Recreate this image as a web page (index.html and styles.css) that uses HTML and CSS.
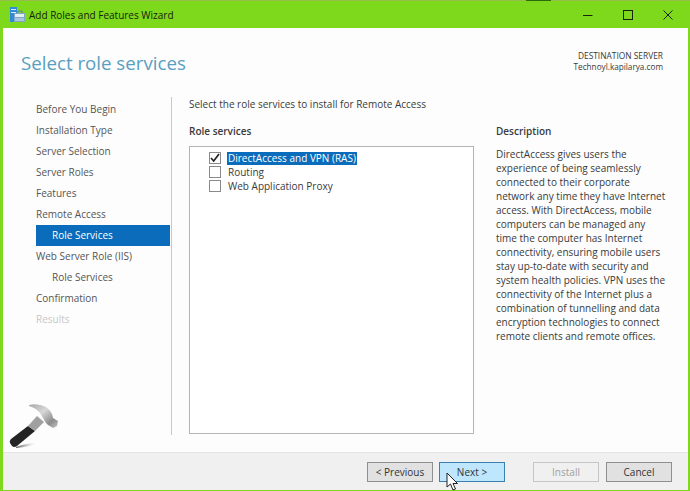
FILE: index.html
```html
<!DOCTYPE html>
<html>
<head>
    <link rel="stylesheet" href="styles.css">
    <title>Add Roles and Features Wizard</title>
</head>
<body>
    <div class="window">
        <div class="topline"><span class="topline-mark"></span></div>
        <div class="titlebar">
            <svg class="app-icon" width="15" height="15" viewBox="0 0 15 15">
                <rect x="0" y="0" width="7" height="15" fill="#2f8ad8"/>
                <rect x="1" y="2" width="5" height="1" fill="#d5ebfb"/>
                <rect x="1" y="5" width="5" height="1" fill="#d5ebfb"/>
                <path d="M8 6V4H12V6" stroke="#5d7f98" fill="none"/>
                <rect x="4" y="6" width="11" height="9" fill="#7fa6c4"/>
                <rect x="5" y="7" width="9" height="3" fill="#e4eef5"/>
                <rect x="5" y="11" width="9" height="3" fill="#a9c5da"/>
            </svg>
            <span class="title-text">Add Roles and Features Wizard</span>
            <div class="win-controls">
                <svg width="12" height="12" viewBox="0 0 12 12"><path d="M1 6.5H10.5" stroke="#16240c" stroke-width="1" fill="none"/></svg>
                <svg width="12" height="12" viewBox="0 0 12 12"><rect x="1.5" y="1.5" width="9" height="9" stroke="#16240c" stroke-width="1" fill="none"/></svg>
                <svg width="12" height="12" viewBox="0 0 12 12"><path d="M1.5 1.5L10.5 10.5M10.5 1.5L1.5 10.5" stroke="#16240c" stroke-width="1" fill="none"/></svg>
            </div>
        </div>

        <div class="content">
            <div class="header">
                <h1>Select role services</h1>
                <div class="dest">
                    <div class="dest-label">DESTINATION SERVER</div>
                    <div>Technoyl.kapilarya.com</div>
                </div>
            </div>

            <div class="main">
                <ul class="nav">
                    <li>Before You Begin</li>
                    <li>Installation Type</li>
                    <li>Server Selection</li>
                    <li>Server Roles</li>
                    <li>Features</li>
                    <li>Remote Access</li>
                    <li class="sub active">Role Services</li>
                    <li>Web Server Role (IIS)</li>
                    <li class="sub">Role Services</li>
                    <li>Confirmation</li>
                    <li class="disabled">Results</li>
                </ul>

                <div class="panel">
                    <p class="intro">Select the role services to install for Remote Access</p>
                    <div class="columns">
                        <div class="services">
                            <div class="col-title">Role services</div>
                            <div class="listbox">
                                <div class="item">
                                    <span class="check">
                                        <svg width="10" height="10" viewBox="0 0 10 10"><path d="M1 5L3.7 8L9 1" stroke="#222" stroke-width="1.7" fill="none"/></svg>
                                    </span>
                                    <span class="label selected">DirectAccess and VPN (RAS)</span>
                                </div>
                                <div class="item"><span class="check"></span><span class="label">Routing</span></div>
                                <div class="item"><span class="check"></span><span class="label">Web Application Proxy</span></div>
                            </div>
                        </div>
                        <div class="description">
                            <div class="col-title">Description</div>
                            <p>DirectAccess gives users the<br>
                            experience of being seamlessly<br>
                            connected to their corporate<br>
                            network any time they have Internet<br>
                            access. With DirectAccess, mobile<br>
                            computers can be managed any<br>
                            time the computer has Internet<br>
                            connectivity, ensuring mobile users<br>
                            stay up-to-date with security and<br>
                            system health policies. VPN uses the<br>
                            connectivity of the Internet plus a<br>
                            combination of tunnelling and data<br>
                            encryption technologies to connect<br>
                            remote clients and remote offices.</p>
                        </div>
                    </div>
                </div>
            </div>
        </div>

        <div class="footer">
            <button class="btn">&lt; Previous</button>
            <button class="btn hover">Next &gt;</button>
            <button class="btn off install">Install</button>
            <button class="btn">Cancel</button>
        </div>

        <!-- watermark sits over the window corner -->
        <svg class="hammer" width="52" height="50" viewBox="0 0 52 50">
            <defs>
                <linearGradient id="steel" x1="0" y1="0" x2="1" y2="1">
                    <stop offset="0" stop-color="#a8a8a8"/>
                    <stop offset="0.4" stop-color="#d8d8d8"/>
                    <stop offset="0.75" stop-color="#8c8c8c"/>
                    <stop offset="1" stop-color="#c4c4c4"/>
                </linearGradient>
                <linearGradient id="fade" x1="0" y1="0" x2="1" y2="0">
                    <stop offset="0" stop-color="#555"/>
                    <stop offset="1" stop-color="#ddd" stop-opacity="0"/>
                </linearGradient>
            </defs>
            <path d="M10 44Q20 40 31 40Q24 44 10 45Z" fill="url(#fade)"/>
            <path d="M22 23L29 28L11 43Q8 45 6 43L4 40Q3 38 5 36Z" fill="#242424"/>
            <path d="M31 13L38 19L29 28L22 23Z" fill="#a0a0a0"/>
            <path d="M23 2Q32 0 40 4Q46 8 47 15L52 18L51 23L47 25L42 22L40 20Q37 15 34 10Q30 5 23 3Z" fill="url(#steel)"/>
        </svg>

        <!-- mouse pointer -->
        <svg class="cursor" width="13" height="20" viewBox="0 0 13 20">
            <path d="M1 1V15L4.5 12L7 18L9.5 17L7 11.5H11.5Z" fill="#fff" stroke="#222" stroke-width="1"/>
        </svg>
    </div>
</body>
</html>
```

FILE: styles.css
```css
* {
    box-sizing: border-box;
}

html, body {
    margin: 0;
    padding: 0;
}

body {
    width: 690px;
    height: 491px;
    overflow: hidden;
    font-family: "Open Sans", "Noto Sans", sans-serif;
    font-size: 10px;
    color: #3a3a3a;
}

.window {
    position: relative;
    width: 690px;
    height: 491px;
    display: flex;
    flex-direction: column;
    background: #7ed91c;
    border-left: 3px solid #7ed91c;
    border-right: 2px solid #7ed91c;
    border-bottom: 1px solid #7ed91c;
}

.topline {
    height: 1px;
    flex: none;
    margin: 0 -2px 0 -3px;
    background: #98bc4c;
}

.topline-mark {
    display: block;
    width: 25px;
    height: 1px;
    margin-left: 526px;
    background: #2c6a10;
}

.titlebar {
    height: 27px;
    flex: none;
    display: flex;
    align-items: center;
    color: #14240a;
    font-size: 10px;
}

.app-icon {
    margin-left: 7px;
    margin-right: 4px;
}

.win-controls {
    margin-left: auto;
    display: flex;
    gap: 28px;
    margin-right: 14px;
}

.content {
    flex: 1;
    background: #fdfdfd;
    display: flex;
    flex-direction: column;
    min-height: 0;
}

.header {
    display: flex;
    justify-content: space-between;
    height: 69px;
    padding: 19px 25px 0 18px;
}

h1 {
    margin: 0;
    font-size: 18.7px;
    font-weight: 400;
    color: #5a9fc0;
    line-height: 32px;
}

.dest {
    text-align: right;
    font-size: 8.2px;
    line-height: 11px;
    padding-top: 3px;
}

.dest-label {
    font-size: 8.4px;
}

.main {
    display: flex;
    flex: 1;
    min-height: 0;
}

.nav {
    list-style: none;
    margin: 0 0 0 33px;
    padding: 2px 0 0;
    width: 134px;
    flex: none;
}

.nav li {
    height: 21px;
    line-height: 21px;
    color: #555;
}

.nav li.sub {
    padding-left: 16px;
}

.nav li.active {
    background: #0a6cba;
    color: #fff;
}

.nav li.disabled {
    color: #c8c8c8;
}

.panel {
    margin-left: 1px;
    border-left: 1px solid #c9c9c9;
    height: 338px;
    padding-left: 17px;
    flex: 1;
}

.intro {
    margin: 0;
    line-height: 14px;
}

.columns {
    display: flex;
    margin-top: 12px;
}

.services {
    width: 285px;
    flex: none;
}

.col-title {
    font-weight: 600;
    line-height: 16px;
}

.listbox {
    margin-top: 7px;
    width: 285px;
    height: 288px;
    border: 1px solid #b5b5b5;
    background: #fff;
    padding: 4px 0 0 19px;
}

.item {
    display: flex;
    align-items: center;
    height: 14px;
}

.check {
    width: 12px;
    height: 12px;
    border: 1px solid #8a8a8a;
    background: #fff;
    margin-right: 6px;
    display: flex;
    align-items: center;
    justify-content: center;
    flex: none;
}

.label {
    padding: 0 1px;
    line-height: 13px;
}

.label.selected {
    background: #0a6cba;
    color: #fff;
}

.description {
    margin-left: 22px;
    width: 184px;
}

.description p {
    margin: 8px 0 0;
    line-height: 14px;
}

.footer {
    height: 38px;
    flex: none;
    background: #f0f0f0;
    border-top: 1px solid #e6e6e6;
    display: flex;
    align-items: center;
    padding: 0 16px 0 364px;
}

.btn {
    width: 66px;
    height: 20px;
    font: inherit;
    color: #333;
    background: #e1e1e1;
    border: 1px solid #8f8f8f;
    padding: 0;
}

.btn.hover {
    margin-left: 6px;
    background: #bee6fd;
    border-color: #3c7fb1;
}

.btn.off {
    background: #f0f0f0;
    border-color: #c6c6c6;
    color: #a0a0a0;
}

.btn.install {
    margin-left: 28px;
    margin-right: 7px;
}

.hammer {
    position: absolute;
    left: 3px;
    top: 403px;
}

.cursor {
    position: absolute;
    left: 443px;
    top: 472px;
}
```
